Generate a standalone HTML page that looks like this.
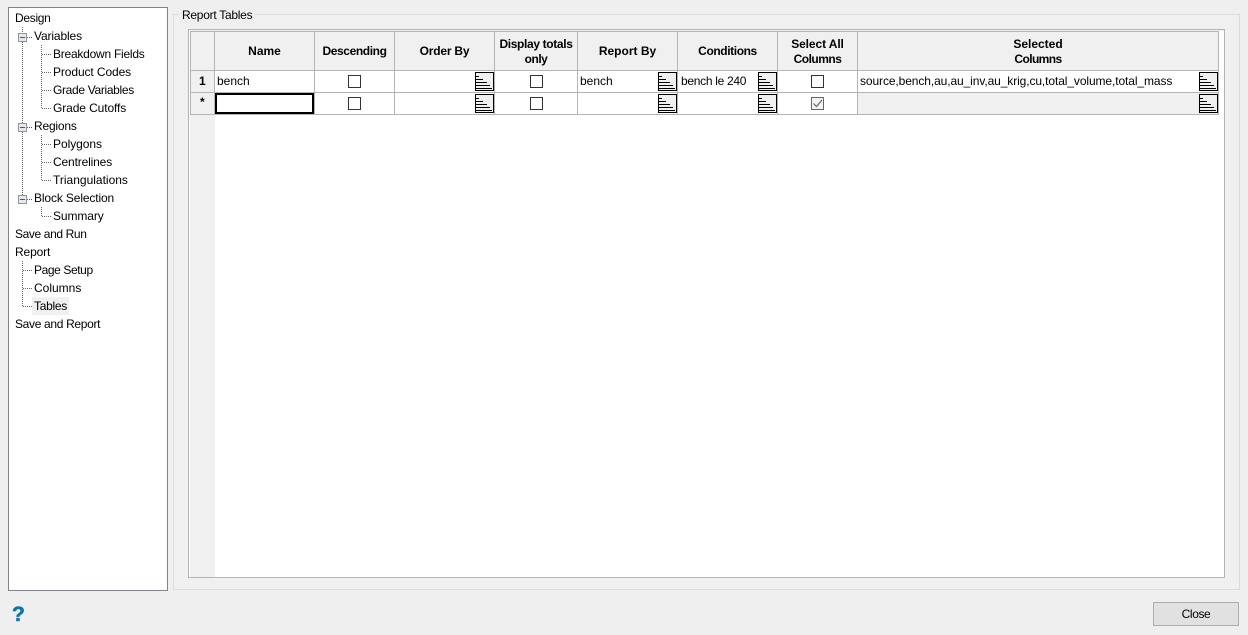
<!DOCTYPE html>
<html><head><meta charset="utf-8"><style>
html,body{margin:0;padding:0;width:1248px;height:635px;overflow:hidden;background:#efefef}
*{box-sizing:border-box}
body{position:relative;font:12px/18px "Liberation Sans",sans-serif;color:#000}
.a,.t,.h,.c{position:absolute}
.t{white-space:nowrap;height:18px}
.h{font-weight:bold;text-align:center;line-height:15px;background:#f0f0f0;display:flex;align-items:center;justify-content:center;top:32px;height:38px}
.h span{display:block}
.l{position:absolute;background:#b4b4b4}
.c{width:13px;height:13px;border:1px solid #333;background:#fff}
svg{position:absolute;left:0;top:0}
</style></head><body>
<div class="a" style="left:8px;top:7px;width:160px;height:584px;background:#fff;border:1px solid #82828c"></div>
<div class="a" style="left:173px;top:14px;width:1067px;height:576px;border:1px solid #dcdcdc;background:#f0f0f0"></div>
<div class="t" style="left:179px;top:6px;background:#efefef;padding:0 3px;letter-spacing:-.27px">Report Tables</div>

<div class="t" style="left:15px;top:9px;letter-spacing:-.3px">Design</div>
<div class="t" style="left:34px;top:27px;letter-spacing:-.13px">Variables</div>
<div class="t" style="left:53px;top:45px;letter-spacing:-.24px">Breakdown Fields</div>
<div class="t" style="left:53px;top:63px;letter-spacing:-.1px">Product Codes</div>
<div class="t" style="left:53px;top:81px;letter-spacing:-.33px">Grade Variables</div>
<div class="t" style="left:53px;top:99px;letter-spacing:-.1px">Grade Cutoffs</div>
<div class="t" style="left:34px;top:117px;letter-spacing:-.2px">Regions</div>
<div class="t" style="left:53px;top:135px;letter-spacing:-.05px">Polygons</div>
<div class="t" style="left:53px;top:153px;letter-spacing:-.15px">Centrelines</div>
<div class="t" style="left:53px;top:171px">Triangulations</div>
<div class="t" style="left:34px;top:189px;letter-spacing:-.13px">Block Selection</div>
<div class="t" style="left:53px;top:207px;letter-spacing:-.1px">Summary</div>
<div class="t" style="left:15px;top:225px;letter-spacing:-.38px">Save and Run</div>
<div class="t" style="left:15px;top:243px;letter-spacing:-.13px">Report</div>
<div class="t" style="left:34px;top:261px;letter-spacing:-.4px">Page Setup</div>
<div class="t" style="left:34px;top:279px">Columns</div>
<div class="a" style="left:32px;top:297px;width:37px;height:18px;background:#f0f0f0"></div>
<div class="t" style="left:34px;top:297px;letter-spacing:-.3px">Tables</div>
<div class="t" style="left:15px;top:315px;letter-spacing:-.33px">Save and Report</div>

<svg width="170" height="340" shape-rendering="crispEdges" fill="none">
<g stroke="#666" stroke-dasharray="1 1">
<path d="M22.5 27V33M22.5 42V123M22.5 132V195M41.5 45V108M41.5 135V180M41.5 207V216M22.5 261V306"/>
<path d="M27 37.5H32M27 127.5H32M27 199.5H32"/>
<path d="M42 54.5H51M42 72.5H51M42 90.5H51M42 108.5H51M42 144.5H51M42 162.5H51M42 180.5H51M42 216.5H51M23 270.5H32M23 288.5H32M23 306.5H32"/>
</g>
<g>
<rect x="18.5" y="33.5" width="8" height="8" fill="#e6e8ee" stroke="#8b95a5"/><path d="M20 37.5H25" stroke="#3a5a8a"/>
<rect x="18.5" y="123.5" width="8" height="8" fill="#e6e8ee" stroke="#8b95a5"/><path d="M20 127.5H25" stroke="#3a5a8a"/>
<rect x="18.5" y="195.5" width="8" height="8" fill="#e6e8ee" stroke="#8b95a5"/><path d="M20 199.5H25" stroke="#3a5a8a"/>
</g>
</svg>

<!-- grid -->
<div class="a" style="left:188px;top:29px;width:1037px;height:549px;background:#fff;border:1px solid #b4b4b4"></div>
<div class="a" style="left:189px;top:30px;width:1035px;height:1px;background:#f0f0f0"></div>
<div class="a" style="left:190px;top:31px;width:1029px;height:40px;background:#f0f0f0"></div>
<div class="a" style="left:190px;top:31px;width:25px;height:546px;background:#f0f0f0"></div>
<div class="a" style="left:858px;top:93px;width:360px;height:21px;background:#f0f0f0"></div>
<div class="l" style="left:190px;top:31px;width:1029px;height:1px"></div>
<div class="l" style="left:190px;top:70px;width:1029px;height:1px"></div>
<div class="l" style="left:190px;top:92px;width:1029px;height:1px"></div>
<div class="l" style="left:190px;top:114px;width:1029px;height:1px"></div>
<div class="l" style="left:190px;top:31px;width:1px;height:84px"></div>
<div class="l" style="left:214px;top:31px;width:1px;height:84px"></div>
<div class="l" style="left:314px;top:31px;width:1px;height:84px"></div>
<div class="l" style="left:394px;top:31px;width:1px;height:84px"></div>
<div class="l" style="left:494px;top:31px;width:1px;height:84px"></div>
<div class="l" style="left:577px;top:31px;width:1px;height:84px"></div>
<div class="l" style="left:677px;top:31px;width:1px;height:84px"></div>
<div class="l" style="left:777px;top:31px;width:1px;height:84px"></div>
<div class="l" style="left:857px;top:31px;width:1px;height:84px"></div>
<div class="l" style="left:1218px;top:31px;width:1px;height:84px"></div>

<div class="h" style="left:215px;width:99px">Name</div>
<div class="h" style="left:315px;width:79px;letter-spacing:-.4px">Descending</div>
<div class="h" style="left:395px;width:99px;letter-spacing:-.2px">Order By</div>
<div class="h" style="left:495px;width:82px;display:block;padding-top:5px"><span style="letter-spacing:-.35px">Display totals</span><span style="letter-spacing:-.5px">only</span></div>
<div class="h" style="left:578px;width:99px">Report By</div>
<div class="h" style="left:678px;width:99px;letter-spacing:-.4px">Conditions</div>
<div class="h" style="left:778px;width:79px;display:block;padding-top:5px"><span style="letter-spacing:-.1px">Select All</span><span style="letter-spacing:-.5px">Columns</span></div>
<div class="h" style="left:858px;width:360px;display:block;padding-top:5px"><span>Selected</span><span style="letter-spacing:-.6px">Columns</span></div>

<div class="t" style="left:199px;top:72px;font-weight:bold">1</div>
<div class="t" style="left:200px;top:93px;font-weight:bold">*</div>
<div class="t" style="left:217px;top:72px">bench</div>
<div class="t" style="left:580px;top:72px">bench</div>
<div class="t" style="left:681px;top:72px;letter-spacing:-.3px">bench le 240</div>
<div class="t" style="left:860px;top:72px;letter-spacing:-.1px">source,bench,au,au_inv,au_krig,cu,total_volume,total_mass</div>

<div class="a" style="left:215px;top:93px;width:99px;height:21px;border:2px solid #000;background:#fff"></div>

<div class="c" style="left:348px;top:75px"></div>
<div class="c" style="left:348px;top:97px"></div>
<div class="c" style="left:530px;top:75px"></div>
<div class="c" style="left:530px;top:97px"></div>
<div class="c" style="left:811px;top:75px"></div>
<div class="c" style="left:811px;top:97px;border-color:#666;background:#f4f4f4"></div>
<svg width="1248" height="120" fill="none">
<path d="M813.5 103.5L816.5 106.5L822 100" stroke="#666" stroke-width="1.2"/>
<g shape-rendering="crispEdges" stroke="#000">
<rect x="475.5" y="72.5" width="18" height="18" fill="#f0f0f0"/><path d="M476 76.5H479M476 79.5H483M476 82.5H487M476 85.5H490M476 88.5H492"/>
<rect x="475.5" y="94.5" width="18" height="18" fill="#f0f0f0"/><path d="M476 98.5H479M476 101.5H483M476 104.5H487M476 107.5H490M476 110.5H492"/>
<rect x="658.5" y="72.5" width="18" height="18" fill="#f0f0f0"/><path d="M659 76.5H662M659 79.5H666M659 82.5H670M659 85.5H673M659 88.5H675"/>
<rect x="658.5" y="94.5" width="18" height="18" fill="#f0f0f0"/><path d="M659 98.5H662M659 101.5H666M659 104.5H670M659 107.5H673M659 110.5H675"/>
<rect x="758.5" y="72.5" width="18" height="18" fill="#f0f0f0"/><path d="M759 76.5H762M759 79.5H766M759 82.5H770M759 85.5H773M759 88.5H775"/>
<rect x="758.5" y="94.5" width="18" height="18" fill="#f0f0f0"/><path d="M759 98.5H762M759 101.5H766M759 104.5H770M759 107.5H773M759 110.5H775"/>
<rect x="1199.5" y="72.5" width="18" height="18" fill="#f0f0f0"/><path d="M1200 76.5H1203M1200 79.5H1207M1200 82.5H1211M1200 85.5H1214M1200 88.5H1216"/>
<rect x="1199.5" y="94.5" width="18" height="18" fill="#f0f0f0"/><path d="M1200 98.5H1203M1200 101.5H1207M1200 104.5H1211M1200 107.5H1214M1200 110.5H1216"/>
</g>
</svg>

<div class="t" style="left:12px;top:604px;height:20px;font:bold 21px/21px 'Liberation Sans',sans-serif;color:#0a76ad;-webkit-text-stroke:.6px #0a76ad">?</div>
<div class="a" style="left:1153px;top:602px;width:86px;height:24px;background:#e1e1e1;border:1px solid #adadad;text-align:center;line-height:22px;letter-spacing:-.4px">Close</div>
</body></html>
